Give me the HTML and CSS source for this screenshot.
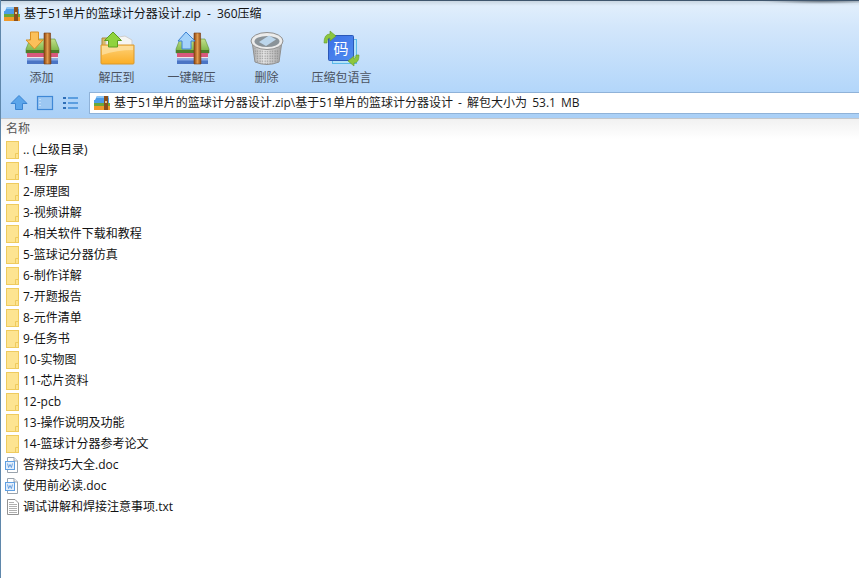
FILE: index.html
```html
<!DOCTYPE html>
<html lang="zh-CN">
<head>
<meta charset="utf-8">
<title>360压缩</title>
<link rel="stylesheet" href="styles.css">
</head>
<body>
<svg class="defs" width="0" height="0">
  <defs>
    <linearGradient id="lid" x1="0" y1="0" x2="0" y2="1">
      <stop offset="0" stop-color="#c4e08a"/>
      <stop offset="1" stop-color="#6fae3c"/>
    </linearGradient>
    <linearGradient id="strap" x1="0" y1="0" x2="1" y2="0">
      <stop offset="0" stop-color="#8a4512"/>
      <stop offset=".5" stop-color="#e09a4c"/>
      <stop offset="1" stop-color="#8a4512"/>
    </linearGradient>
    <linearGradient id="front" x1="0" y1="0" x2="0" y2="1">
      <stop offset="0" stop-color="#fed27a"/>
      <stop offset="1" stop-color="#fbae25"/>
    </linearGradient>
    <linearGradient id="code" x1="0" y1="0" x2="1" y2="1">
      <stop offset="0" stop-color="#3d6fe6"/>
      <stop offset="1" stop-color="#4f8df0"/>
    </linearGradient>
    <linearGradient id="basket" x1="0" y1="0" x2="1" y2="0">
      <stop offset="0" stop-color="#a9a9a9"/>
      <stop offset=".4" stop-color="#e6e6e6"/>
      <stop offset="1" stop-color="#a2a2a2"/>
    </linearGradient>
    <pattern id="holes" width="2.500" height="2.500" patternUnits="userSpaceOnUse">
      <rect x=".5" y=".5" width="1.200" height="1.200" fill="#777" opacity=".75"/>
    </pattern>
    <symbol id="rar" viewBox="0 0 36 36">
      <path d="M2 19 L6 9 H31 L35 19 V23 H2Z" fill="url(#lid)" stroke="#5d8f34" stroke-width=".6"/>
      <rect x="2" y="20" width="33" height="3" fill="#4f7d2c"/>
      <rect x="3" y="23" width="31" height="4" fill="#d8587c"/>
      <rect x="3" y="27" width="31" height="1.500" fill="#f0e4e8"/>
      <rect x="3" y="28.500" width="31" height="5.500" fill="#4a74c4"/>
      <rect x="3" y="29" width="31" height="1.500" fill="#86a8e6"/>
      <path d="M20 3 H26.500 L27 34 H20Z" fill="url(#strap)" stroke="#7a3d10" stroke-width=".6"/>
    </symbol>
    <symbol id="rar-small" viewBox="0 0 16 16">
      <path d="M1 5 L3 1 H15 V8 H0 V5Z" fill="#4d9de8"/>
      <path d="M3 1 H15 V3 H2Z" fill="#8cc4f4"/>
      <rect x="0" y="8" width="16" height="3" fill="#6aa83a"/>
      <rect x="0" y="11" width="16" height="4" fill="#f09a2a"/>
      <rect x="10" y="1" width="4" height="14" fill="#8a4f1c"/>
      <rect x="11" y="6" width="2" height="2" fill="#e6c48a"/>
    </symbol>
    <symbol id="folder-s" viewBox="0 0 14 18">
      <rect x="1.500" y="0.500" width="12" height="17" fill="#fde491" stroke="#efcb5e"/>
      <path d="M10.500 17.500 V12.500 H13.500" fill="none" stroke="#efcb5e"/>
    </symbol>
    <symbol id="doc" viewBox="0 0 14 18">
      <path d="M2.500 1.500 H9 L12.500 5 V16.500 H2.500Z" fill="#fff" stroke="#9aa3ad"/>
      <path d="M9 1.500 V5 H12.500" fill="#eef1f5" stroke="#9aa3ad"/>
      <rect x="0.500" y="5.500" width="9" height="8" fill="#e3eefb" stroke="#5f9fe2"/>
      <path d="M2.500 7.500 L3.600 11.500 L5 8.500 L6.400 11.500 L7.500 7.500" fill="none" stroke="#4f8fd8" stroke-width=".8"/>
    </symbol>
    <symbol id="txt" viewBox="0 0 14 18">
      <path d="M2.500 1.500 H10 L13.500 5 V16.500 H2.500Z" fill="#fff" stroke="#929292"/>
      <path d="M4 4.500 H9 M4 6.500 H12 M4 8.500 H12 M4 10.500 H12 M4 12.500 H12 M4 14.500 H12" stroke="#b0b0b0"/>
    </symbol>
  </defs>
</svg>
<div class="window">
  <header class="chrome">
    <div class="titlebar">
      <svg class="title-icon"><use href="#rar-small"/></svg>
      <span>基于51单片的篮球计分器设计.zip - 360压缩</span>
    </div>
    <nav class="toolbar">
      <div class="tool">
        <svg class="tool-icon" viewBox="0 0 36 36">
          <use href="#rar"/>
          <path d="M6.500 2 H14.500 V10 H19 L10.500 19 L2 10 H6.500Z" fill="#fbc05a" stroke="#d98f24"/>
        </svg>
        <span>添加</span>
      </div>
      <div class="tool">
        <svg class="tool-icon" viewBox="0 0 36 36">
          <path d="M3 8 H12 L14 10 H20 V16 H3Z" fill="#d9b869" stroke="#a98a40"/>
          <path d="M7 12 V9 L26 6 L33 10 V17 H7Z" fill="#f5f5f3" stroke="#cfcfcf"/>
          <path d="M2 15 H35 V33 A1 1 0 0 1 34 34 H3 A1 1 0 0 1 2 33Z" fill="url(#front)" stroke="#d9982c"/>
          <path d="M3 16 H34 V20 Q18 20 3 25Z" fill="#fde0a0" opacity=".8"/>
          <path d="M14 2 L22.500 10.500 H18.500 V17 H9.500 V10.500 H5.500Z" fill="#8fd33d" stroke="#5e9e22"/>
        </svg>
        <span>解压到</span>
      </div>
      <div class="tool">
        <svg class="tool-icon" viewBox="0 0 36 36">
          <use href="#rar"/>
          <path d="M12 2 L21 11 H17 V19 H8 V11 H4Z" fill="#a4d2fa" stroke="#3f83d4"/>
        </svg>
        <span>一键解压</span>
      </div>
      <div class="tool">
        <svg class="tool-icon" viewBox="0 0 36 36">
          <path d="M3 11 L6 32 Q18 37 30 32 L33 11Z" fill="url(#basket)" stroke="#8f8f8f"/>
          <path d="M5 18 L7.500 32 Q18 36 28.500 32 L31 18 Q18 24 5 18Z" fill="url(#holes)"/>
          <ellipse cx="18" cy="11" rx="16" ry="8.500" fill="#ececec" stroke="#8f8f8f"/>
          <ellipse cx="18" cy="11.500" rx="12.500" ry="5.500" fill="#8a9399"/>
          <path d="M10 12 L20 5.500 L27 9.500 L17 16Z" fill="#bcd6ec"/>
        </svg>
        <span>删除</span>
      </div>
      <div class="tool">
        <svg class="tool-icon" viewBox="0 0 36 36">
          <rect x="8.500" y="9.500" width="24" height="24" fill="#b4e2f8" stroke="#5cbaea"/>
          <rect x="4.500" y="5.500" width="25" height="25" rx="1" fill="url(#code)" stroke="#2b58b8"/>
          <text class="glyph" x="17" y="24">码</text>
          <path d="M0 13 Q0 4 6 4 V1 L12 6 L6 11 V8 Q3 8 3 13Z" fill="#8cc63e" stroke="#659a26" stroke-width=".6"/>
          <path d="M35 25 Q35 33 30 33 V36 L24 31 L30 26 V29 Q32 29 32 25Z" fill="#8cc63e" stroke="#659a26" stroke-width=".6"/>
        </svg>
        <span>压缩包语言</span>
      </div>
    </nav>
    <div class="addressbar">
      <svg class="nav-icon" viewBox="0 0 18 18">
        <path d="M9 1.500 L17 9.500 H12.500 V15.500 H5.500 V9.500 H1Z" fill="#5ba5ea" stroke="#3a84d2"/>
      </svg>
      <svg class="nav-icon" viewBox="0 0 18 18">
        <rect x="1.500" y="2.500" width="15" height="13" fill="#9cc7f2" stroke="#3f88d6" stroke-width="1.200"/>
        <path d="M4 5 V12" stroke="#e8f3fd" stroke-dasharray="1 2"/>
      </svg>
      <svg class="nav-icon" viewBox="0 0 18 18">
        <path d="M1 4 H4 M1 9 H4 M1 14 H4" stroke="#2f6fb8" stroke-width="2"/>
        <path d="M6 4 H16 M6 9 H16 M6 14 H16" stroke="#5b9ee0" stroke-width="2"/>
      </svg>
      <div class="address">
        <svg class="title-icon"><use href="#rar-small"/></svg>
        <span>基于51单片的篮球计分器设计.zip\基于51单片的篮球计分器设计 - 解包大小为 53.1 MB</span>
      </div>
    </div>
  </header>
  <div class="list-head">名称</div>
  <ul class="list">
    <li><svg class="file-icon"><use href="#folder-s"/></svg>.. (上级目录)</li>
    <li><svg class="file-icon"><use href="#folder-s"/></svg>1-程序</li>
    <li><svg class="file-icon"><use href="#folder-s"/></svg>2-原理图</li>
    <li><svg class="file-icon"><use href="#folder-s"/></svg>3-视频讲解</li>
    <li><svg class="file-icon"><use href="#folder-s"/></svg>4-相关软件下载和教程</li>
    <li><svg class="file-icon"><use href="#folder-s"/></svg>5-篮球记分器仿真</li>
    <li><svg class="file-icon"><use href="#folder-s"/></svg>6-制作详解</li>
    <li><svg class="file-icon"><use href="#folder-s"/></svg>7-开题报告</li>
    <li><svg class="file-icon"><use href="#folder-s"/></svg>8-元件清单</li>
    <li><svg class="file-icon"><use href="#folder-s"/></svg>9-任务书</li>
    <li><svg class="file-icon"><use href="#folder-s"/></svg>10-实物图</li>
    <li><svg class="file-icon"><use href="#folder-s"/></svg>11-芯片资料</li>
    <li><svg class="file-icon"><use href="#folder-s"/></svg>12-pcb</li>
    <li><svg class="file-icon"><use href="#folder-s"/></svg>13-操作说明及功能</li>
    <li><svg class="file-icon"><use href="#folder-s"/></svg>14-篮球计分器参考论文</li>
    <li><svg class="file-icon"><use href="#doc"/></svg>答辩技巧大全.doc</li>
    <li><svg class="file-icon"><use href="#doc"/></svg>使用前必读.doc</li>
    <li><svg class="file-icon"><use href="#txt"/></svg>调试讲解和焊接注意事项.txt</li>
  </ul>
</div>
</body>
</html>
```

FILE: styles.css
```css
* { box-sizing: border-box; }
html, body { margin: 0; height: 100%; }
body {
  overflow: hidden;
  background: #fff;
  color: #111;
  font: 12px/1 "Open Sans", "Noto Sans CJK SC", sans-serif;
}
.defs { position: absolute; }
.window { height: 578px; display: flex; flex-direction: column; border-left: 1px solid #5f87ab; }
.chrome {
  height: 119px;
  border-top: 1px solid #3f566e;
  border-bottom: 1px solid #c3c7cc;
  background:
    radial-gradient(ellipse 60px 3px at 820px 0, rgba(30, 40, 50, .55), transparent),
    linear-gradient(#c9d6e2 0, #e0eefc 5px, #d2e6fb 28px, #b2d6fa 92px, #a9cff6 118px);
}
.titlebar { height: 24px; display: flex; align-items: center; gap: 4px; padding: 2px 0 0 3px; word-spacing: 3px; }
.title-icon { width: 16px; height: 16px; flex: none; }
.toolbar { height: 67px; display: flex; padding-left: 3px; }
.tool { width: 75px; display: flex; flex-direction: column; align-items: center; color: #4a5260; }
.tool-icon { width: 36px; height: 36px; margin-top: 5px; margin-bottom: 6px; overflow: visible; }
.glyph { font: 15px "Noto Sans CJK SC", sans-serif; fill: #fff; text-anchor: middle; }
.addressbar { display: flex; align-items: center; height: 22px; padding-left: 9px; }
.nav-icon { width: 18px; height: 18px; margin-right: 8px; flex: none; }
.nav-icon:nth-child(3) { margin-right: 9px; }
.address {
  flex: 1;
  height: 22px;
  display: flex;
  align-items: center;
  gap: 4px;
  padding-left: 4px;
  background: #fff;
  border: 1px solid #8fb2d8;
  border-right: 0;
  color: #1a1a1a;
  word-spacing: 2px;
}
.list-head {
  height: 20px;
  padding: 4px 0 0 5px;
  background: linear-gradient(#f1f1f1, #fff);
  color: #555;
}
.list { list-style: none; margin: 0; padding: 0; }
.list li { height: 21px; display: flex; align-items: center; gap: 4px; padding-left: 4px; }
.file-icon { width: 14px; height: 18px; flex: none; }
```
